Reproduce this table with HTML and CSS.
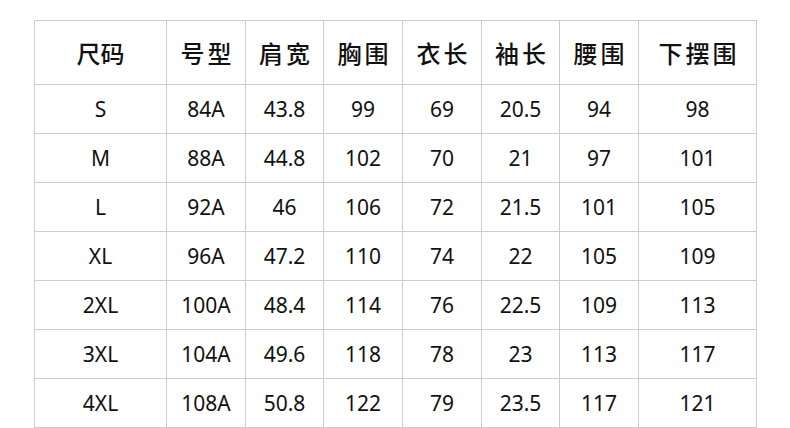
FILE: index.html
```html
<!DOCTYPE html>
<html lang="zh">
<head>
<meta charset="utf-8">
<link rel="stylesheet" href="styles.css">
</head>
<body>
<div class="page">
<table class="size-table">
  <colgroup>
    <col class="c1"><col class="c2"><col class="c3"><col class="c4"><col class="c5"><col class="c6"><col class="c7"><col class="c8">
  </colgroup>
  <thead>
    <tr class="head">
      <th class="tight">尺码</th><th>号型</th><th>肩宽</th><th>胸围</th><th>衣长</th><th>袖长</th><th>腰围</th><th>下摆围</th>
    </tr>
  </thead>
  <tbody>
    <tr><td>S</td><td>84A</td><td>43.8</td><td>99</td><td>69</td><td>20.5</td><td>94</td><td>98</td></tr>
    <tr><td>M</td><td>88A</td><td>44.8</td><td>102</td><td>70</td><td>21</td><td>97</td><td>101</td></tr>
    <tr><td>L</td><td>92A</td><td>46</td><td>106</td><td>72</td><td>21.5</td><td>101</td><td>105</td></tr>
    <tr><td>XL</td><td>96A</td><td>47.2</td><td>110</td><td>74</td><td>22</td><td>105</td><td>109</td></tr>
    <tr><td>2XL</td><td>100A</td><td>48.4</td><td>114</td><td>76</td><td>22.5</td><td>109</td><td>113</td></tr>
    <tr><td>3XL</td><td>104A</td><td>49.6</td><td>118</td><td>78</td><td>23</td><td>113</td><td>117</td></tr>
    <tr><td>4XL</td><td>108A</td><td>50.8</td><td>122</td><td>79</td><td>23.5</td><td>117</td><td>121</td></tr>
  </tbody>
</table>
</div>
</body>
</html>
```

FILE: styles.css
```css
html, body {
  margin: 0;
  padding: 0;
  background: #ffffff;
}
.page {
  padding: 20px 0 0 34px;
}
.size-table {
  border-collapse: collapse;
  table-layout: fixed;
  width: 722px;
  font-family: "Noto Sans", "Noto Sans CJK SC", sans-serif;
  color: #111111;
}
.c1 { width: 132px; }
.c2 { width: 79px; }
.c3 { width: 78px; }
.c4 { width: 79px; }
.c5 { width: 79px; }
.c6 { width: 78px; }
.c7 { width: 79px; }
.c8 { width: 118px; }
.size-table th,
.size-table td {
  border: 1px solid #cccccc;
  padding: 0;
  text-align: center;
  vertical-align: middle;
}
.size-table th {
  height: 63px;
  font-family: "Noto Sans CJK SC", sans-serif;
  font-size: 24px;
  line-height: 30px;
  font-weight: 500;
  letter-spacing: 3px;
  text-indent: 3px;
}
.size-table th.tight {
  letter-spacing: 0;
  text-indent: 0;
}
.size-table td {
  height: 48px;
  font-size: 21px;
  line-height: 28px;
  font-weight: 400;
}
```
